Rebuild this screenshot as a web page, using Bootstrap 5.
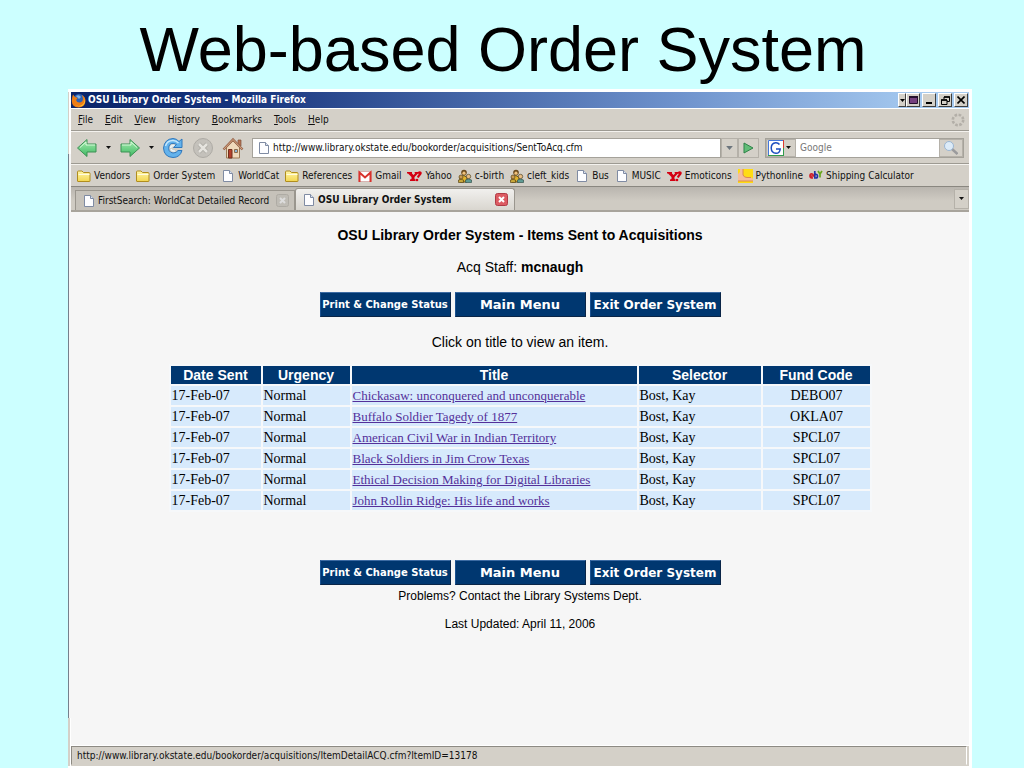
<!DOCTYPE html>
<html lang="en">
<head>
<meta charset="utf-8">
<meta name="viewport" content="width=device-width, initial-scale=1">
<title>Web-based Order System</title>
<link href="https://cdn.jsdelivr.net/npm/bootstrap@5.3.0/dist/css/bootstrap.min.css" rel="stylesheet">
<style>
  body { background: #ccffff; color: #000; font-family: "Liberation Sans", Arial, sans-serif; }
  svg { display: block; flex: none; }
  button { border: 0; background: none; padding: 0; color: inherit; font: inherit; }
  .slide-title { font-size: 63px; line-height: 72px; padding: 13px 18px 4px 0; }
  .browser { margin: 0 52px 0 68px; background: #fff; padding: 3px 3px 2px 0; }
  .edge { width: 3px; }
  .edge-top { height: 62px; border-left: 1px solid #d4d0c8; }
  .edge-mid { border-left: 1px solid #75808c; background: #f6f6f6; }
  .edge-low { height: 48px; border-left: 2px solid #d4d0c8; }
  .chrome-ui { font-family: "DejaVu Sans Condensed", "DejaVu Sans", sans-serif; font-size: 10px; line-height: 14px; background: #d4d0c8; color: #111; }
  .title-bar { height: 16px; color: #fff; background: linear-gradient(90deg, #0a246a 0%, #16337c 18%, #6f93cd 68%, #a6caf0 95%); gap: 2px; padding-right: 1px; }
  .win-btn { width: 14px; height: 14px; background: #d4d0c8; border: 1px solid; border-color: #fff #404040 #404040 #fff; color: #000; }
  .win-btn.slim { width: 8px; margin-right: -2px; }
  .menu-bar { height: 23px; border-top: 1px solid #fff; border-bottom: 1px solid #9d9a92; padding: 0 4px 0 7px; }
  .menu-list { gap: 12px; }
  .nav-bar { height: 33px; border-top: 1px solid #f4f2ee; border-bottom: 1px solid #9d9a92; padding: 0 5px; }
  .mark-bar { height: 23px; border-top: 1px solid #f4f2ee; border-bottom: 1px solid #8a8780; padding: 0 6px; gap: 6px; }
  .mark-bar a { display: flex; gap: 3px; color: #111; text-decoration: none; white-space: nowrap; }
  .tab-bar { height: 25px; background: linear-gradient(#b9b5ae, #cfcbc3 60%); border-bottom: 2px solid #a8a49c; }
  .tab-item { background: #c6c2ba; border: 1px solid #9a968e; border-bottom: 0; height: 20px; width: 220px; padding: 0 5px 0 6px; }
  .tab-item.current { background: linear-gradient(#f1f0ee, #d9d6cf); height: 22px; border-radius: 3px 3px 0 0; padding-right: 6px; }
  .tab-item button { gap: 2px; }
  .field { border: 1px solid #a5a29a; background: #fff; height: 20px; gap: 2px; }
  .field input { border: 0; outline: 0; font-size: 10px; line-height: 16px; padding: 0; min-width: 0; background: transparent; color: #111; }
  .field input::placeholder { color: #777; opacity: 1; }
  .search-field { margin-left: 6px; gap: 0; }
  .search-field input { width: 143px; }
  .side-btn { background: #d4d0c8; height: 20px; border: 1px solid #b5b1a9; }
  .search-field .side-btn { height: 18px; gap: 2px; }
  .page-area { background: #f6f6f6; font-size: 14px; line-height: 16px; padding-top: 15px; }
  .page-area h2 { font-size: 14px; line-height: 16px; }
  .key-row { gap: 4px; }
  .nav-key { width: 131px; height: 25px; background: #003770; border: 1px solid; border-color: #3c6ba3 #0a2547 #0a2547 #1c5290; color: #fff; font-family: "DejaVu Sans", sans-serif; font-weight: 700; white-space: nowrap; }
  .key-s { font-size: 10px; } .key-m { font-size: 13px; } .key-l { font-size: 12px; }
  .gap-below { margin-bottom: 17px; }
  .hint, .contact { margin-bottom: 14px; }
  .orders { width: 703px; max-width: 100%; border-collapse: separate; border-spacing: 2px; table-layout: fixed; background: #f6f8fa; }
  .orders th { background: #003770; color: #fff; text-align: center; line-height: 18px; padding: 0; }
  .orders td { background: #d7eafc; font-family: "Liberation Serif", "Times New Roman", serif; line-height: 19px; padding: 0 0 0 1px; }
  .orders td a { color: #54309a; font-size: 13px; }
  .c-date { width: 90px; } .c-urg { width: 87px; } .c-title { width: 285px; } .c-sel { width: 122px; }
  .foot-text { font-size: 12px; line-height: 14px; }
  .status-bar { height: 21px; border-top: 1px solid #fff; padding: 0 2px 1px 0; }
  .status-text { border: 1px solid #8d8a83; border-right-color: #fff; border-bottom-color: #d4d0c8; padding-left: 5px; }
</style>
</head>
<body class="min-vh-100 d-flex flex-column">
<svg width="0" height="0" class="position-absolute" aria-hidden="true">
  <defs>
    <linearGradient id="green" x1="0" y1="0" x2="0" y2="1"><stop offset="0" stop-color="#a8eeb0"/><stop offset="1" stop-color="#3fb863"/></linearGradient>
    <linearGradient id="gold" x1="0" y1="0" x2="0" y2="1"><stop offset="0" stop-color="#fff6a8"/><stop offset="1" stop-color="#f3d64f"/></linearGradient>
    <symbol id="i-folder" viewBox="0 0 14 14"><path d="M.5 12V3q0-1 1-1h3.500l1.500 1.500H12q1 0 1 1V12q0 .5-.5.5H1q-.5 0-.5-.5z" fill="url(#gold)" stroke="#b08d1e"/><path d="M1.500 5.500h11" stroke="#fffbe0"/></symbol>
    <symbol id="i-page" viewBox="0 0 14 14"><path d="M2.500 1.500h6l3 3v8h-9z" fill="#fdfdff" stroke="#7f8ba3"/><path d="M8.500 1.500v3h3" fill="#dbe3f2" stroke="#7f8ba3"/></symbol>
    <symbol id="i-arrow" viewBox="0 0 22 22"><path d="M1.500 11 11 2.500v4.500h9v8h-9v4.500z" fill="url(#green)" stroke="#3d9155" stroke-linejoin="round"/><path d="M4 10.500 10 5v3h9" fill="none" stroke="#d5f8d8"/></symbol>
    <symbol id="i-yahoo" viewBox="0 0 15 14"><path d="M0 3h5v1.500L6.500 6 8 4.500 7.500 3H11v1.500L7.500 8v2l1 .5V12H3v-1.500L4.500 10V8L1 4.500H0z" fill="#d40012"/><path d="M11 4.500Q12 3 13.200 3.500T12 6.500l-1.200 2" fill="none" stroke="#d40012" stroke-width="2.200"/><circle cx="10" cy="11" r="1.300" fill="#d40012"/></symbol>
    <symbol id="i-people" viewBox="0 0 14 14"><circle cx="6" cy="3.500" r="2.800" fill="#6b4a1c"/><circle cx="6" cy="4.200" r="1.600" fill="#f0c27c"/><path d="M2 13V8q4-3 7 0v5z" fill="#e0b32c" stroke="#5a4515"/><circle cx="3" cy="8" r="2" fill="#c99a54" stroke="#5a4515" stroke-width=".7"/><circle cx="10.500" cy="7.500" r="2.200" fill="#e9bd83" stroke="#4c4325" stroke-width=".7"/><path d="M7.500 13.500V11q3-2 6 0v2.500z" fill="#5f9b94" stroke="#35544f" stroke-width=".7"/><path d="M.5 13.500V11q2.500-1.500 5 0v2.500z" fill="#c9a83a" stroke="#5a4515" stroke-width=".7"/></symbol>
    <symbol id="i-down" viewBox="0 0 5 3"><path d="M0 0h5L2.500 3z" fill="currentColor"/></symbol>
  </defs>
</svg>

<h1 class="slide-title text-center fw-normal m-0">Web-based Order System</h1>

<main class="browser d-flex flex-grow-1">
  <div class="edge d-flex flex-column" aria-hidden="true">
    <div class="edge-top"></div><div class="edge-mid flex-grow-1"></div><div class="edge-low"></div>
  </div>
  <div class="d-flex flex-column flex-grow-1">
    <header class="chrome-ui">
      <div class="title-bar d-flex align-items-center">
        <svg width="15" height="15" viewBox="0 0 15 15"><circle cx="8" cy="7" r="6" fill="#2d62b5"/><path d="M5 3q3-2 5 1L8 6z" fill="#83b5e8"/><path d="M2 1.500 4 4q2 0 2.500 1.500L5 7q1 3 4 2.500 3-.5 3-4L11 2q3.500 2 3.500 6-.5 6-7 6.500Q1 14 .8 8 .8 4 2 1.500z" fill="#ee7d16"/><path d="M13 4q2 5-2 8-4 2-7.500-.5Q8 15 12 12.500 15.500 9 13 4z" fill="#ffc931"/></svg>
        <span class="fw-bold me-auto">OSU Library Order System - Mozilla Firefox</span>
        <button class="win-btn slim d-flex align-items-center justify-content-center" aria-label="More"><svg width="5" height="3"><use href="#i-down"/></svg></button>
        <button class="win-btn d-flex align-items-center justify-content-center" aria-label="Shade"><svg width="9" height="8"><path d="M.5.5h8v7h-8z" fill="#75407e" stroke="#24102c"/><path d="M0 1h9" stroke="#24102c" stroke-width="2"/></svg></button>
        <button class="win-btn d-flex align-items-center justify-content-center" aria-label="Minimize"><svg width="8" height="8"><path d="M1 7h6" stroke="#000" stroke-width="2"/></svg></button>
        <button class="win-btn d-flex align-items-center justify-content-center" aria-label="Restore"><svg width="9" height="9"><path d="M3 1h5.500v4.500H6M3 1v2M.5 4h5.500v4.500H.5z" fill="none" stroke="#000"/><path d="M3 1h6M0 4h6" stroke="#000" stroke-width="1.600"/></svg></button>
        <button class="win-btn d-flex align-items-center justify-content-center" aria-label="Close"><svg width="8" height="8"><path d="m.5.5 7 7m0-7-7 7" stroke="#000" stroke-width="1.600"/></svg></button>
      </div>

      <nav class="menu-bar d-flex align-items-center" aria-label="Menu">
        <div class="menu-list d-flex flex-grow-1">
          <button><u>F</u>ile</button><button><u>E</u>dit</button><button><u>V</u>iew</button><button>Hi<u>s</u>tory</button><button><u>B</u>ookmarks</button><button><u>T</u>ools</button><button><u>H</u>elp</button>
        </div>
        <svg width="14" height="14" viewBox="0 0 14 14"><circle cx="7" cy="7" r="5.200" fill="none" stroke="#b3afa8" stroke-width="2.600" stroke-dasharray="2.600 1.480"/></svg>
      </nav>

      <div class="nav-bar d-flex align-items-center">
        <button aria-label="Back"><svg width="22" height="22"><use href="#i-arrow"/></svg></button>
        <button class="px-2" aria-label="Back history"><svg width="5" height="3"><use href="#i-down"/></svg></button>
        <button aria-label="Forward"><svg width="22" height="22" viewBox="0 0 22 22"><g transform="matrix(-1 0 0 1 22 0)"><use href="#i-arrow" width="22" height="22"/></g></svg></button>
        <button class="px-2" aria-label="Forward history"><svg width="5" height="3"><use href="#i-down"/></svg></button>
        <button aria-label="Reload"><svg width="22" height="22" viewBox="0 0 22 22"><path d="M20 2v8.500h-8.500l3-3Q9 4.500 7 9q-1.500 6 4 7 3.500 0 5-2.500h4Q18 20.500 11 20.500 2 20 1.500 11 2.500 2 11 1.500q3.500 0 6 3z" fill="#63b2ec" stroke="#2f78bd"/><path d="M3.500 9Q5 3.500 11 3.500q3 0 5.500 2.500" fill="none" stroke="#c7e7fb" stroke-width="1.500"/><path d="M8.500 11q.5-3 4-2.500M9 12q1 2.500 4 2" fill="none" stroke="#e9f6fd" stroke-width="1.500"/></svg></button>
        <button class="ms-2" aria-label="Stop"><svg width="22" height="22"><circle cx="11" cy="11" r="9.500" fill="#c4c1bb" stroke="#aeaba5"/><path d="m7 7 8 8m0-8-8 8" stroke="#aaa7a1" stroke-width="4"/><path d="m7 7 8 8m0-8-8 8" stroke="#e6e4df" stroke-width="2.500"/></svg></button>
        <button class="ms-2 me-2" aria-label="Home"><svg width="22" height="22"><path d="M4.500 10v11h13V10L11 4z" fill="#efd9bb" stroke="#9c7853"/><path d="M16 3h3v6l-3-3z" fill="#b77252" stroke="#805039" stroke-width=".7"/><path d="m1.500 12.500 9.500-10 9.500 10" fill="none" stroke="#9a6a50" stroke-width="2.500"/><path d="m2 12 9-9.500 9 9.500" fill="none" stroke="#d5a17f"/><path d="M6.500 12.500h3.500V21H6.500z" fill="#b5402c" stroke="#71301f"/><path d="M12.500 12.500h3v3h-3z" fill="#8db4d5" stroke="#8b6a4b"/></svg></button>
        <div class="field d-flex align-items-center flex-grow-1"><svg class="ms-1" width="14" height="14"><use href="#i-page"/></svg><input class="flex-grow-1" type="text" aria-label="Address" value="http://www.library.okstate.edu/bookorder/acquisitions/SentToAcq.cfm"></div>
        <button class="side-btn px-1 text-secondary" aria-label="Address history"><svg width="7" height="4"><use href="#i-down"/></svg></button>
        <button class="side-btn px-1" aria-label="Go"><svg width="11" height="12"><path d="M1 1v10l9-5z" fill="#62bd78" stroke="#2d8348"/></svg></button>
        <div class="field search-field d-flex align-items-center">
          <button class="side-btn d-flex align-items-center pe-1" aria-label="Search engine"><svg width="17" height="16" viewBox="0 0 17 16"><path d="M1 0h16v16H1z" fill="#fff"/><path d="M1.500 16V.5H16" fill="none" stroke="#4477db"/><path d="M16.500 0v8" stroke="#db3832"/><path d="M16.500 8v8M1 15.500h16" stroke="#329b4d"/><path d="M12.500 4.500Q11 2.500 8.700 2.700 4.300 3 4.200 8q.2 5 4.800 5.300 3.800 0 4.200-4.300H9" fill="none" stroke="#1c4ec0" stroke-width="1.500"/></svg><svg width="5" height="3"><use href="#i-down"/></svg></button>
          <input type="text" class="ps-1" placeholder="Google" aria-label="Search the web">
          <button class="side-btn px-1" aria-label="Search"><svg width="14" height="16" viewBox="1 0 14 16"><path d="m9 9 5.500 5" stroke="#9b9b9d" stroke-width="2.500"/><circle cx="6" cy="6" r="4.500" fill="#dcebf8" stroke="#9bb6d2"/></svg></button>
        </div>
      </div>

      <nav class="mark-bar d-flex align-items-center" aria-label="Bookmarks">
        <a href="#"><svg width="14" height="14"><use href="#i-folder"/></svg>Vendors</a>
        <a href="#"><svg width="14" height="14"><use href="#i-folder"/></svg>Order System</a>
        <a href="#"><svg width="14" height="14"><use href="#i-page"/></svg>WorldCat</a>
        <a href="#"><svg width="14" height="14"><use href="#i-folder"/></svg>References</a>
        <a href="#"><svg width="14" height="14"><path d="M.5 2.500h13v10H.5z" fill="#fff" stroke="#d8b3b0"/><path d="M1.500 13V3.500L7 8.500l5.500-5V13" fill="none" stroke="#d8322c" stroke-width="2"/></svg>Gmail</a>
        <a href="#"><svg width="15" height="14"><use href="#i-yahoo"/></svg>Yahoo</a>
        <a href="#"><svg width="14" height="14"><use href="#i-people"/></svg>c-birth</a>
        <a href="#"><svg width="14" height="14"><use href="#i-people"/></svg>cleft_kids</a>
        <a href="#"><svg width="14" height="14"><use href="#i-page"/></svg>Bus</a>
        <a href="#"><svg width="14" height="14"><use href="#i-page"/></svg>MUSIC</a>
        <a href="#"><svg width="15" height="14"><use href="#i-yahoo"/></svg>Emoticons</a>
        <a href="#"><svg width="15" height="14" viewBox="0 0 15 14"><path d="M0 0h15v14H0z" fill="#ffdc13"/><path d="M0 5 2 3V0h3v6q1 2.500 4 2.500h4q2 0 2 2V12H0z" fill="#f5bd9c"/><path d="M5 0v6q1 2.500 4 2.500h4M0 12h15" fill="none" stroke="#dc8a54"/></svg>Pythonline</a>
        <a href="#"><svg width="14" height="14" fill="none" stroke-width="1.700"><path d="M1 7h3.500Q4.200 4.800 2.700 4.900 1 5 1 7t3 2" stroke="#d0202b"/><path d="M5.800 2v7h1.200Q8.500 9 8.500 7T6 5.500" stroke="#2535a5"/><path d="m9 2 2 3 2-3m-2 3v3.500" stroke="#68a71b"/></svg>Shipping Calculator</a>
      </nav>

      <div class="tab-bar d-flex align-items-end">
        <div class="tab-item d-flex align-items-center ms-1"><button class="d-flex flex-grow-1"><svg width="14" height="14"><use href="#i-page"/></svg>FirstSearch: WorldCat Detailed Record</button><button aria-label="Close tab"><svg width="13" height="13"><rect x=".5" y=".5" width="12" height="12" rx="2" fill="#bfbcb5" stroke="#aeaba4"/><path d="m4 4 5 5m0-5-5 5" stroke="#ddd" stroke-width="2"/></svg></button></div>
        <div class="tab-item current d-flex align-items-center"><button class="d-flex flex-grow-1 fw-bold"><svg width="14" height="14"><use href="#i-page"/></svg>OSU Library Order System</button><button aria-label="Close tab"><svg width="13" height="13"><rect x=".5" y=".5" width="12" height="12" rx="2" fill="#dc5b62" stroke="#b03b45"/><path d="m4 4 5 5m0-5-5 5" stroke="#fff" stroke-width="2"/></svg></button></div>
        <button class="side-btn ms-auto align-self-center px-1" aria-label="All tabs"><svg width="5" height="3"><use href="#i-down"/></svg></button>
      </div>
    </header>

    <section class="page-area flex-grow-1 d-flex flex-column align-items-center text-center">
      <h2 class="fw-bold m-0 mb-3">OSU Library Order System - Items Sent to Acquisitions</h2>
      <p class="gap-below">Acq Staff: <b>mcnaugh</b></p>
      <div class="key-row gap-below d-flex">
        <button class="nav-key key-s">Print &amp; Change Status</button><button class="nav-key key-m">Main Menu</button><button class="nav-key key-l">Exit Order System</button>
      </div>
      <p class="hint">Click on title to view an item.</p>
      <table class="orders text-start mb-5">
        <colgroup><col class="c-date"><col class="c-urg"><col class="c-title"><col class="c-sel"><col></colgroup>
        <thead><tr><th scope="col">Date Sent</th><th scope="col">Urgency</th><th scope="col">Title</th><th scope="col">Selector</th><th scope="col">Fund Code</th></tr></thead>
        <tbody>
          <tr><td>17-Feb-07</td><td>Normal</td><td><a href="#">Chickasaw: unconquered and unconquerable</a></td><td>Bost, Kay</td><td class="text-center">DEBO07</td></tr>
          <tr><td>17-Feb-07</td><td>Normal</td><td><a href="#">Buffalo Soldier Tagedy of 1877</a></td><td>Bost, Kay</td><td class="text-center">OKLA07</td></tr>
          <tr><td>17-Feb-07</td><td>Normal</td><td><a href="#">American Civil War in Indian Territory</a></td><td>Bost, Kay</td><td class="text-center">SPCL07</td></tr>
          <tr><td>17-Feb-07</td><td>Normal</td><td><a href="#">Black Soldiers in Jim Crow Texas</a></td><td>Bost, Kay</td><td class="text-center">SPCL07</td></tr>
          <tr><td>17-Feb-07</td><td>Normal</td><td><a href="#">Ethical Decision Making for Digital Libraries</a></td><td>Bost, Kay</td><td class="text-center">SPCL07</td></tr>
          <tr><td>17-Feb-07</td><td>Normal</td><td><a href="#">John Rollin Ridge: His life and works</a></td><td>Bost, Kay</td><td class="text-center">SPCL07</td></tr>
        </tbody>
      </table>
      <div class="key-row d-flex mb-1">
        <button class="nav-key key-s">Print &amp; Change Status</button><button class="nav-key key-m">Main Menu</button><button class="nav-key key-l">Exit Order System</button>
      </div>
      <p class="foot-text contact">Problems? Contact the Library Systems Dept.</p>
      <p class="foot-text mb-0">Last Updated: April 11, 2006</p>
    </section>

    <footer class="chrome-ui status-bar d-flex">
      <div class="status-text flex-grow-1 d-flex align-items-center">http://www.library.okstate.edu/bookorder/acquisitions/ItemDetailACQ.cfm?ItemID=13178</div>
    </footer>
  </div>
</main>
<script src="https://cdn.jsdelivr.net/npm/bootstrap@5.3.0/dist/js/bootstrap.bundle.min.js"></script>
</body>
</html>
